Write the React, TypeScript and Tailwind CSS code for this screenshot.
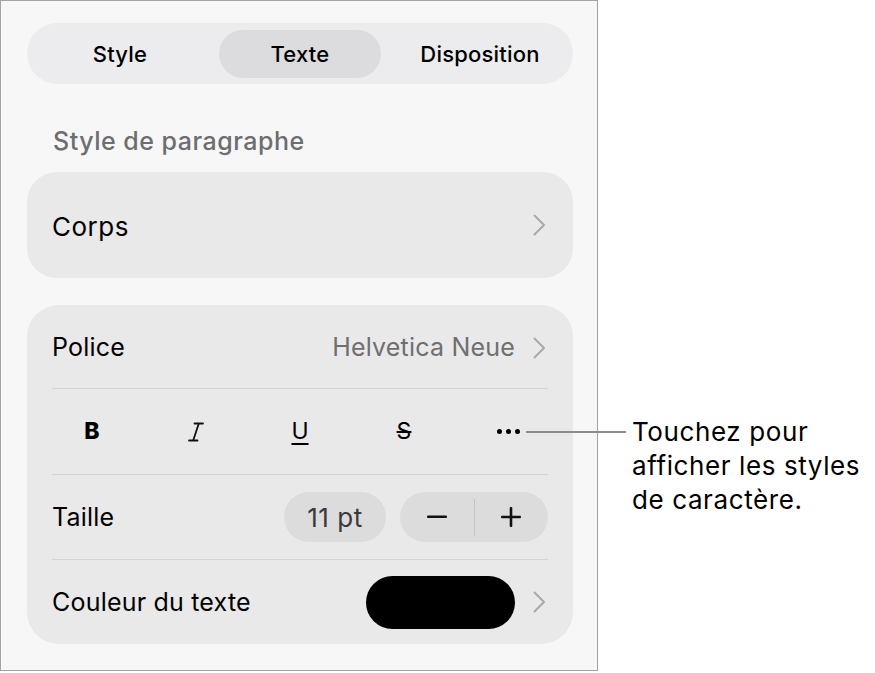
import React from "react";

const font = { fontFamily: "Inter, 'Noto Sans', sans-serif" };

function Chevron() {
  return (
    <svg width="13" height="22" viewBox="0 0 13 22" fill="none" className="shrink-0">
      <polyline points="1.5,1.5 11,11 1.5,20.5" stroke="#a9a9a9" strokeWidth="2" strokeLinecap="round" strokeLinejoin="round" />
    </svg>
  );
}

function Divider() {
  return <div className="mx-[25px] h-px bg-[#d3d3d3]" />;
}

export default function App() {
  return (
    <div className="relative w-[875px] h-[673px] bg-white flex" style={font}>
      {/* inspector panel */}
      <div className="w-[598px] h-[671px] border border-[#a3a3a3] bg-[#f7f7f8] pl-[26px] pr-[24px] pt-[22px] flex flex-col">
        {/* tabs */}
        <div className="h-[61px] rounded-full bg-[#ececee] px-[3px] grid grid-cols-3 items-center text-[22px] tracking-[0.2px] font-medium text-black">
          <div className="flex items-center justify-center h-[48px] pt-[2px]">Style</div>
          <div className="flex items-center justify-center h-[48px] pt-[2px] mx-[9px] rounded-full bg-[#dcdcde]">Texte</div>
          <div className="flex items-center justify-center h-[48px] pt-[2px]">Disposition</div>
        </div>

        <div className="mt-[45px] pl-[26px] text-[25px] tracking-[0.5px] font-medium text-[#6d6d70] leading-none">Style de paragraphe</div>

        {/* paragraph style */}
        <div className="mt-[18px] h-[106px] rounded-[30px] bg-[#e9e9e9] flex items-center justify-between pl-[25px] pr-[27px]">
          <span className="text-[26px] tracking-[0.5px] text-black pt-[2px]">Corps</span>
          <Chevron />
        </div>

        {/* font options */}
        <div className="mt-[27px] rounded-[32px] bg-[#e9e9e9] flex flex-col text-[25px] tracking-[0.2px]">
          <div className="h-[83px] flex items-center justify-between px-[25px] pr-[27px] pt-[2px]">
            <span className="text-black">Police</span>
            <div className="flex items-center gap-[18px]">
              <span className="text-[#6f6f6f]">Helvetica Neue</span>
              <Chevron />
            </div>
          </div>
          <Divider />
          <div className="h-[85px] px-[13px] grid grid-cols-[repeat(5,104px)] items-center text-black">
            <div className="flex justify-center">
              <span className="text-[23px] font-extrabold tracking-normal">B</span>
            </div>
            <div className="flex justify-center">
              <svg width="16" height="20" viewBox="0 0 16 20" fill="none">
                <line x1="6.5" y1="1.5" x2="15" y2="1.5" stroke="#111" strokeWidth="1.8" strokeLinecap="round" />
                <line x1="1" y1="18.5" x2="9.5" y2="18.5" stroke="#111" strokeWidth="1.8" strokeLinecap="round" />
                <line x1="10.8" y1="1.5" x2="5.2" y2="18.5" stroke="#111" strokeWidth="1.8" />
              </svg>
            </div>
            <div className="flex justify-center">
              <span className="text-[23px] tracking-normal underline underline-offset-[4px] decoration-[1.5px]">U</span>
            </div>
            <div className="flex justify-center">
              <span className="text-[23px] tracking-normal line-through decoration-[1.5px]">S</span>
            </div>
            <div className="flex justify-center items-center gap-[4px]">
              <span className="w-[5px] h-[5px] rounded-full bg-black" />
              <span className="w-[5px] h-[5px] rounded-full bg-black" />
              <span className="w-[5px] h-[5px] rounded-full bg-black" />
            </div>
          </div>
          <Divider />
          <div className="h-[84px] flex items-center justify-between px-[25px]">
            <span className="text-black pt-[2px]">Taille</span>
            <div className="flex items-center gap-[14px]">
              <div className="w-[102px] h-[50px] rounded-full bg-[#dcdcdd] flex items-center justify-center text-[26px] tracking-[0.5px] text-[#3a3a3a]">11 pt</div>
              <div className="w-[148px] h-[50px] rounded-full bg-[#dcdcdd] flex items-center">
                <div className="flex-1 flex items-center justify-center">
                  <svg width="20" height="4" viewBox="0 0 20 4"><rect x="0" y="0.5" width="20" height="2.6" rx="1" fill="#111" /></svg>
                </div>
                <div className="w-px h-[37px] bg-[#c2c2c2]" />
                <div className="flex-1 flex items-center justify-center">
                  <svg width="20" height="20" viewBox="0 0 20 20">
                    <rect x="0" y="8.7" width="20" height="2.6" rx="1" fill="#111" />
                    <rect x="8.7" y="0" width="2.6" height="20" rx="1" fill="#111" />
                  </svg>
                </div>
              </div>
            </div>
          </div>
          <Divider />
          <div className="h-[84px] flex items-center justify-between px-[25px] pr-[27px]">
            <span className="text-black pt-[2px]">Couleur du texte</span>
            <div className="flex items-center gap-[18px]">
              <div className="w-[149px] h-[53px] rounded-full bg-black" />
              <Chevron />
            </div>
          </div>
        </div>
      </div>

      {/* callout */}
      <div className="absolute left-[526px] top-[431px] w-[100px] h-[2px] bg-[#8c8c8c]" />
      <div className="absolute left-[632px] top-[415px] text-[26px] tracking-[0.6px] leading-[34px] text-black">
        Touchez pour
        <br />
        afficher les styles
        <br />
        de caractère.
      </div>
    </div>
  );
}
